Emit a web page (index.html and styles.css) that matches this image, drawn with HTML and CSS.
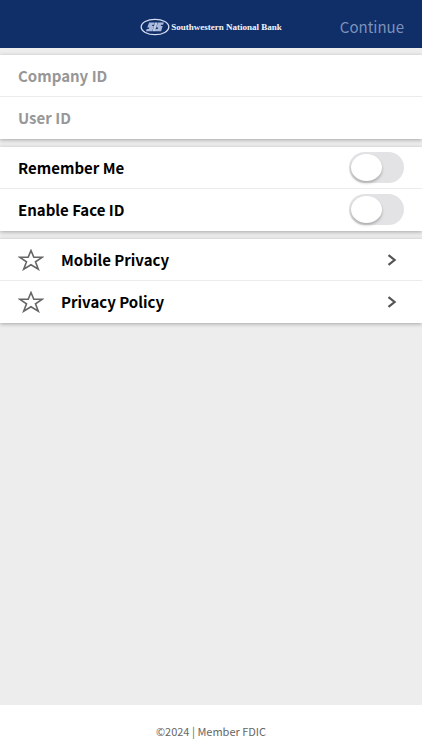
FILE: index.html
```html
<!DOCTYPE html>
<html lang="en">
<head>
<meta charset="utf-8">
<meta name="viewport" content="width=device-width, initial-scale=1">
<title>Southwestern National Bank</title>
<link rel="stylesheet" href="styles.css">
</head>
<body>
<form class="page">
  <header class="header">
    <div class="brand">
      <svg class="brand-mark" viewBox="0 0 30 18" aria-hidden="true">
        <ellipse cx="15" cy="9" rx="13.8" ry="7.7" fill="none" stroke="#d5def0" stroke-width="1.3"/>
        <g fill="#a9b9dc">
          <path d="M9.2 4.5h5.6l-.7 2.2h-1.6l-.4 1.3h1.8l-1.6 5.2H6l.7-2.2h2l.5-1.4h-2z"/>
          <path d="M18 4.5h5.8l-.7 2.2h-2l-.4 1.3h2l-1.6 5.2h-6.4l.7-2.2h2.2l.5-1.4h-2z"/>
          <path d="M15 4.5h2.6l-2.7 8.7h-2.4z" fill="#c0cce6"/>
        </g>
      </svg>
      <span class="brand-name">Southwestern National Bank</span>
    </div>
    <button class="continue" type="submit" disabled>Continue</button>
  </header>
  <main class="content">
    <section class="card">
      <div class="row"><input class="field" type="text" placeholder="Company ID" aria-label="Company ID"></div>
      <div class="row"><input class="field" type="text" placeholder="User ID" aria-label="User ID"></div>
    </section>
    <section class="card">
      <div class="row"><label class="label" for="remember">Remember Me</label><input class="switch" type="checkbox" id="remember"></div>
      <div class="row"><label class="label" for="face">Enable Face ID</label><input class="switch" type="checkbox" id="face"></div>
    </section>
    <nav class="card">
      <a class="row" href="#mobile-privacy">
        <svg class="star" viewBox="0 0 26 22" aria-hidden="true"><path d="M13 1.5l2.8 6.7h8.6l-6.9 4.6 2.8 7.4-7.3-4.5-7.3 4.5 2.8-7.4-6.9-4.6h8.6z"/></svg>
        <span class="label">Mobile Privacy</span>
        <svg class="chevron" viewBox="0 0 10 12" aria-hidden="true"><path d="M1.5 1.2L7.6 6l-6.1 4.8"/></svg>
      </a>
      <a class="row" href="#privacy-policy">
        <svg class="star" viewBox="0 0 26 22" aria-hidden="true"><path d="M13 1.5l2.8 6.7h8.6l-6.9 4.6 2.8 7.4-7.3-4.5-7.3 4.5 2.8-7.4-6.9-4.6h8.6z"/></svg>
        <span class="label">Privacy Policy</span>
        <svg class="chevron" viewBox="0 0 10 12" aria-hidden="true"><path d="M1.5 1.2L7.6 6l-6.1 4.8"/></svg>
      </a>
    </nav>
  </main>
  <footer class="footer">©2024 | Member FDIC</footer>
</form>
</body>
</html>
```
FILE: styles.css
```css
* { box-sizing: border-box; }
body {
  margin: 0;
  background: #ededed;
  color: #000;
  font-family: "Noto Sans CJK SC", "Noto Sans", sans-serif;
  font-size: 15px;
  line-height: 24px;
}
.page {
  display: flex;
  flex-direction: column;
  min-height: 100vh;
}
.header {
  display: grid;
  grid-template-columns: 1fr auto 1fr;
  align-items: center;
  height: 48px;
  padding: 6px 18px 0;
  background: #102f68;
}
.brand {
  grid-column: 2;
  display: flex;
  align-items: center;
  gap: 1px;
}
.brand-mark {
  width: 30px;
  height: 18px;
}
.brand-name {
  color: #f2f5fc;
  font: bold 9px/12px "Liberation Serif", serif;
  white-space: nowrap;
}
.continue {
  justify-self: end;
  padding: 0;
  border: 0;
  background: none;
  color: #7d91bb;
  font: inherit;
}
.content {
  display: flex;
  flex: 1;
  flex-direction: column;
  gap: 8px;
  padding: 7px 0;
}
.card {
  background: #fff;
  box-shadow: 0 1px 4px rgba(0, 0, 0, 0.3);
}
.row {
  display: flex;
  align-items: center;
  height: 42px;
  padding: 0 18px;
  border-bottom: 1px solid #ececec;
  color: inherit;
  text-decoration: none;
}
.row:last-child { border-bottom-color: #fff; }
.label {
  flex: 1;
  font-weight: 700;
}
.field {
  flex: 1;
  min-width: 0;
  height: 40px;
  padding: 0;
  border: 0;
  outline: 0;
  background: none;
  color: inherit;
  font: inherit;
  font-weight: 700;
}
.field::placeholder {
  color: #979797;
  opacity: 1;
}
.switch {
  display: flex;
  align-items: center;
  appearance: none;
  width: 55px;
  height: 31px;
  margin: 0;
  padding: 0 2px;
  border-radius: 16px;
  background: #e3e3e5;
}
.switch::before {
  content: "";
  width: 31px;
  height: 27px;
  border-radius: 50%;
  background: #fff;
  box-shadow: 0 2px 3px rgba(0, 0, 0, 0.25);
}
.switch:checked {
  justify-content: flex-end;
  background: #102f68;
}
.star {
  width: 26px;
  height: 22px;
  margin-right: 17px;
  fill: none;
  stroke: #666;
  stroke-width: 1.6;
}
.chevron {
  width: 10px;
  height: 12px;
  margin-right: 7px;
  fill: none;
  stroke: #555;
  stroke-width: 2.2;
}
.footer {
  padding: 14px 18px 7px;
  background: #fff;
  color: #666;
  font-size: 11px;
  text-align: center;
}
```
